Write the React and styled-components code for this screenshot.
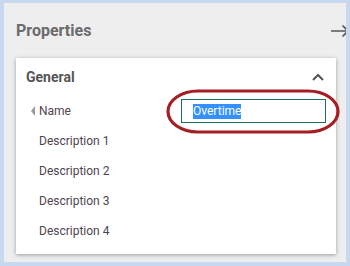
import React from "react"
import styled, { createGlobalStyle } from "styled-components"

const Global = createGlobalStyle`
	body {
		margin: 0;
		background: #c6d9f1;
		font-family: Roboto, "Liberation Sans", sans-serif;
	}
`

const Frame = styled.div`
	width: 350px;
	height: 266px;
	box-sizing: border-box;
	border-style: solid;
	border-color: #c6d9f1;
	border-width: 3px 4px 4px 4px;
`

const Panel = styled.div`
	height: 100%;
	background: #eeeeee;
	overflow: hidden;
	display: flex;
	flex-direction: column;
`

const Header = styled.div`
	height: 55px;
	display: flex;
	align-items: center;
	justify-content: space-between;
	padding: 0 0 0 12px;
	box-sizing: border-box;
`

const Title = styled.span`
	font-size: 16px;
	font-weight: 700;
	color: #6b6b6b;
`

const Arrow = styled.svg`
	width: 20px;
	height: 14px;
	margin-right: -4px;
`

const Card = styled.div`
	margin: 0 10px 0 12px;
	height: 196px;
	background: #fff;
	box-shadow: 0 1px 4px rgba(0, 0, 0, 0.35);
	position: relative;
`

const CardHeader = styled.div`
	height: 38px;
	display: flex;
	align-items: center;
	justify-content: space-between;
	padding: 0 12px 0 10px;
`

const CardTitle = styled.span`
	font-size: 14px;
	font-weight: 700;
	color: #555;
`

const Rows = styled.div`
	display: flex;
	flex-direction: column;
`

const Row = styled.div`
	height: 30px;
	display: flex;
	align-items: center;
	padding-left: 23px;
	position: relative;
`

const Marker = styled.span`
	position: absolute;
	left: 15px;
	top: 50%;
	margin-top: -5px;
	width: 0;
	height: 0;
	border-top: 5px solid transparent;
	border-bottom: 5px solid transparent;
	border-right: 4px solid #9a9a9a;
`

const Label = styled.span`
	font-size: 12px;
	color: #4f4450;
	width: 142px;
`

const Field = styled.div`
	width: 145px;
	height: 24px;
	box-sizing: border-box;
	border: 1px solid #1f6e55;
	display: flex;
	align-items: center;
	padding-left: 11px;
`

const Selected = styled.span`
	font-size: 12px;
	color: #fff;
	background: #3390ff;
	line-height: 15px;
`

const Ring = styled.svg`
	position: absolute;
	left: 150px;
	top: 31px;
	width: 176px;
	height: 46px;
	pointer-events: none;
`

const descriptions = ["Description 1", "Description 2", "Description 3", "Description 4"]

const App = () => (
	<>
		<Global />
		<Frame>
			<Panel>
				<Header>
					<Title>Properties</Title>
					<Arrow viewBox="0 0 20 14">
						<path d="M1 7 H18 M12.5 1.5 L18 7 L12.5 12.5" fill="none" stroke="#555" strokeWidth="1.6" />
					</Arrow>
				</Header>
				<Card>
					<CardHeader>
						<CardTitle>General</CardTitle>
						<svg width="12" height="8" viewBox="0 0 12 8">
							<path d="M1 7 L6 2 L11 7" fill="none" stroke="#555" strokeWidth="2" />
						</svg>
					</CardHeader>
					<Rows>
						<Row>
							<Marker />
							<Label>Name</Label>
							<Field>
								<Selected>Overtime</Selected>
							</Field>
						</Row>
						{descriptions.map((d) => (
							<Row key={d}>
								<Label>{d}</Label>
							</Row>
						))}
					</Rows>
					<Ring viewBox="0 0 176 46">
						<rect x="2" y="2" width="170" height="41" rx="30" ry="20.5" fill="none" stroke="#a51e24" strokeWidth="3.2" />
					</Ring>
				</Card>
			</Panel>
		</Frame>
	</>
)

export default App
